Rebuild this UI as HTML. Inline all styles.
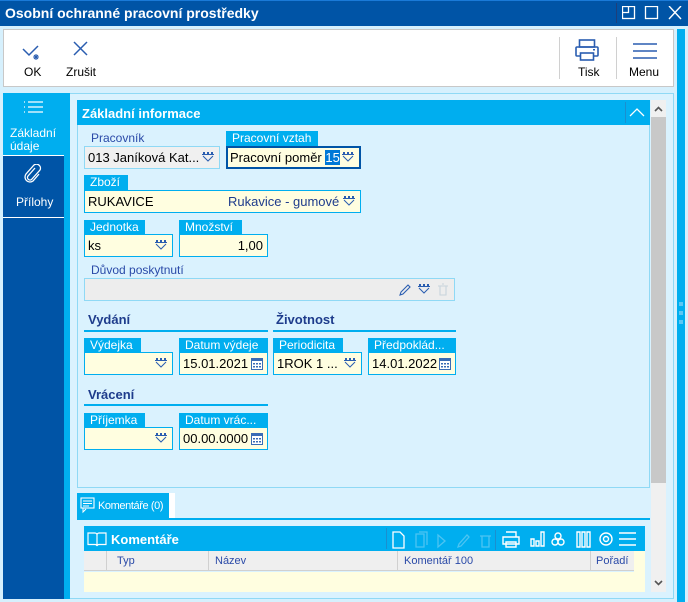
<!DOCTYPE html>
<html><head><meta charset="utf-8"><style>
*{box-sizing:border-box;margin:0;padding:0}
body{width:688px;height:602px;overflow:hidden;background:#d6f0fd;font-family:"Liberation Sans",sans-serif;font-size:12px;position:relative}
.a{position:absolute}
.lab{position:absolute;background:#00aeef;color:#fff;font-size:12px;line-height:15px;padding-left:6px;height:15px}
.plab{position:absolute;color:#2a4aa8;font-size:12px}
.inp{position:absolute;background:#fffee0;border:1px solid #00aeef;height:23px;line-height:21px;padding-left:3px;font-size:13px;color:#000;white-space:nowrap;overflow:hidden}
.dd{position:absolute;right:5px;top:5px}
.h{position:absolute;font-weight:bold;color:#1e3c8c;font-size:13px}
.ul{position:absolute;height:2px;background:#00aeef}
.cal{position:absolute;right:3px;top:4px}
</style></head><body>
<svg width="0" height="0" style="position:absolute"><defs>
<g id="dd"><rect x="1" y="0" width="2" height="2" fill="#2a5db0"/><rect x="5" y="0" width="2" height="2" fill="#2a5db0"/><rect x="9" y="0" width="2" height="2" fill="#2a5db0"/><path d="M0 2.5h12M1 4l5 5 5-5" stroke="#2a5db0" fill="none" stroke-width="1"/></g>
<g id="cal"><rect x="0.5" y="1.5" width="11" height="11" fill="#fff" stroke="#3a6cb5"/><rect x="0.5" y="1.5" width="11" height="2.5" fill="#3a6cb5"/><g fill="#3a6cb5"><rect x="2" y="6" width="2" height="1.5"/><rect x="5" y="6" width="2" height="1.5"/><rect x="8" y="6" width="2" height="1.5"/><rect x="2" y="9" width="2" height="1.5"/><rect x="5" y="9" width="2" height="1.5"/><rect x="8" y="9" width="2" height="1.5"/></g></g>
</defs></svg>

<!-- title bar -->
<div class="a" style="left:0;top:0;width:688px;height:26px;background:#0054a6;border-top:1px solid #1a7ad8"></div>
<div class="a" style="left:5px;top:5px;color:#fff;font-weight:bold;font-size:14px">Osobní ochranné pracovní prostředky</div>
<div class="a" style="left:616px;top:3px;width:1px;height:20px;background:#1e3f7a"></div>
<svg class="a" style="left:622px;top:6px" width="64" height="16"><rect x="0.5" y="0.5" width="12" height="12" fill="none" stroke="#fff" stroke-width="1.3"/><path d="M0.5 6.5h6v-6" fill="none" stroke="#fff" stroke-width="1.3"/><rect x="23.5" y="0.5" width="12" height="12" fill="none" stroke="#fff" stroke-width="1.3"/><path d="M47 0l12 13M59 0l-12 13" stroke="#fff" stroke-width="1.4"/></svg>

<!-- toolbar -->
<div class="a" style="left:3px;top:29px;width:671px;height:58px;background:#fff;border:1px solid #c8c8c8"></div>
<svg class="a" style="left:22px;top:42px" width="22" height="20"><path d="M1 7l6 6 9-9" stroke="#2a5db0" fill="none" stroke-width="1.5"/><path d="M14 12v6M11 15h6M12 13l4 4M16 13l-4 4" stroke="#2a5db0" stroke-width="1.1"/></svg>
<div class="a" style="left:24px;top:65px;font-size:12px">OK</div>
<svg class="a" style="left:73px;top:41px" width="16" height="16"><path d="M1 1l13 13M14 1L1 14" stroke="#2a5db0" stroke-width="1.5"/></svg>
<div class="a" style="left:66px;top:65px;font-size:12px">Zrušit</div>
<div class="a" style="left:559px;top:37px;width:1px;height:42px;background:#d0d0d0"></div>
<div class="a" style="left:616px;top:37px;width:1px;height:42px;background:#d0d0d0"></div>
<svg class="a" style="left:575px;top:39px" width="25" height="23"><rect x="4.5" y="1" width="15" height="7" fill="none" stroke="#2a5db0" stroke-width="1.6"/><rect x="1" y="8" width="22" height="9" rx="1" fill="none" stroke="#2a5db0" stroke-width="1.6"/><rect x="5.5" y="14" width="13" height="7" fill="#fff" stroke="#2a5db0" stroke-width="1.6"/><rect x="18" y="10" width="2" height="1.5" fill="#2a5db0"/></svg>
<div class="a" style="left:578px;top:65px;font-size:12px">Tisk</div>
<svg class="a" style="left:632px;top:42px" width="26" height="18"><path d="M1 2h24M1 9h24M1 16h24" stroke="#2a5db0" stroke-width="1.6"/></svg>
<div class="a" style="left:629px;top:65px;font-size:12px">Menu</div>

<!-- right strip -->
<div class="a" style="left:677px;top:29px;width:8px;height:573px;background:#00aeef"></div>
<div class="a" style="left:679px;top:302px;width:4px;height:4px;background:#5cc8f5"></div>
<div class="a" style="left:679px;top:311px;width:4px;height:4px;background:#5cc8f5"></div>
<div class="a" style="left:679px;top:320px;width:4px;height:4px;background:#5cc8f5"></div>

<!-- left nav -->
<div class="a" style="left:3px;top:93px;width:61px;height:506px;background:#0054a6"></div>
<div class="a" style="left:3px;top:93px;width:61px;height:62px;background:#00aeef"></div>
<div class="a" style="left:3px;top:155px;width:61px;height:1px;background:#fff"></div>
<div class="a" style="left:3px;top:217px;width:61px;height:1px;background:#fff"></div>
<svg class="a" style="left:22px;top:101px" width="22" height="14"><path d="M2 1h1M2 6h1M2 11h1M6 1h15M6 6h15M6 11h15" stroke="#fff" stroke-width="1.2"/></svg>
<div class="a" style="left:10px;top:127px;color:#fff;font-size:12px;line-height:13px">Základní<br>údaje</div>
<svg class="a" style="left:24px;top:164px" width="18" height="20"><path d="M11 4L4 12a2.5 2.5 0 0 0 4 3l8-9a4 4 0 0 0-6-5L2 10a5 5 0 0 0 7 7l6-7" fill="none" stroke="#fff" stroke-width="1.3"/></svg>
<div class="a" style="left:16px;top:195px;color:#fff;font-size:12px">Přílohy</div>
<div class="a" style="left:64px;top:93px;width:6px;height:506px;background:#00aeef"></div>

<!-- content -->
<div class="a" style="left:70px;top:93px;width:604px;height:506px;background:#daf2fe;border:1px solid #8fd9f5;border-left:none"></div>
<div class="a" style="left:77px;top:100px;width:573px;height:388px;border:1px solid #8fd9f5"></div>
<div class="a" style="left:77px;top:100px;width:573px;height:25px;background:#00aeef"></div>
<div class="a" style="left:82px;top:106px;color:#fff;font-weight:bold;font-size:13px">Základní informace</div>
<div class="a" style="left:625px;top:102px;width:1px;height:21px;background:#1a8fcf"></div>
<svg class="a" style="left:629px;top:108px" width="16" height="9"><path d="M1 8l7-7 7 7" stroke="#fff" fill="none" stroke-width="1.3"/></svg>
<!-- scrollbar -->
<div class="a" style="left:651px;top:100px;width:15px;height:492px;background:#f0f0f0"></div>
<div class="a" style="left:651px;top:117px;width:15px;height:366px;background:#c8c8c8"></div>
<svg class="a" style="left:654px;top:106px" width="9" height="6"><path d="M1 5l3.5-3.5L8 5" stroke="#555" fill="none" stroke-width="1.6"/></svg>
<svg class="a" style="left:654px;top:580px" width="9" height="6"><path d="M1 1l3.5 3.5L8 1" stroke="#555" fill="none" stroke-width="1.6"/></svg>

<!-- Pracovník -->
<div class="plab" style="left:91px;top:131px">Pracovník</div>
<div class="inp" style="left:84px;top:146px;width:136px;background:#f0f0f0;border-color:#8fd9f5">013 Janíková Kat...<svg class="dd" width="12" height="10"><use href="#dd"/></svg></div>
<div class="lab" style="left:226px;top:131px;width:92px">Pracovní vztah</div>
<div class="inp" style="left:226px;top:146px;width:135px;border:2px solid #0054a6;line-height:19px;padding-left:2px">Pracovní poměr <span style="background:#0078d7;color:#fff">15</span><svg class="dd" width="12" height="10" style="top:4px"><use href="#dd"/></svg></div>
<!-- Zboží -->
<div class="lab" style="left:84px;top:175px;width:44px">Zboží</div>
<div class="inp" style="left:84px;top:190px;width:277px">RUKAVICE<span class="a" style="left:143px;color:#1e3c8c">Rukavice - gumové</span><svg class="dd" width="12" height="10"><use href="#dd"/></svg></div>
<!-- Jednotka / Množství -->
<div class="lab" style="left:84px;top:220px;width:61px">Jednotka</div>
<div class="inp" style="left:84px;top:234px;width:89px">ks<svg class="dd" width="12" height="10"><use href="#dd"/></svg></div>
<div class="lab" style="left:179px;top:220px;width:63px">Množství</div>
<div class="inp" style="left:179px;top:234px;width:89px;text-align:right;padding-right:4px">1,00</div>
<!-- Důvod -->
<div class="plab" style="left:91px;top:263px">Důvod poskytnutí</div>
<div class="inp" style="left:84px;top:278px;width:371px;background:#ededed;border-color:#8fd9f5"></div>
<svg class="a" style="left:398px;top:283px" width="60" height="14"><path d="M2 12l1-3 7-7 2 2-7 7z" fill="none" stroke="#2a5db0" stroke-width="1.1"/><g transform="translate(20,1)"><use href="#dd"/></g><path d="M40 3h10M42 3v9h6V3M44 1h2" fill="none" stroke="#c8d4dc" stroke-width="1.1"/></svg>
<!-- Vydání / Životnost -->
<div class="h" style="left:88px;top:312px">Vydání</div>
<div class="ul" style="left:84px;top:330px;width:184px"></div>
<div class="h" style="left:276px;top:312px">Životnost</div>
<div class="ul" style="left:273px;top:330px;width:183px"></div>
<div class="lab" style="left:84px;top:338px;width:57px">Výdejka</div>
<div class="inp" style="left:84px;top:352px;width:89px"><svg class="dd" width="12" height="10"><use href="#dd"/></svg></div>
<div class="lab" style="left:179px;top:338px;width:89px">Datum výdeje</div>
<div class="inp" style="left:179px;top:352px;width:89px">15.01.2021<svg class="cal" width="13" height="14"><use href="#cal"/></svg></div>
<div class="lab" style="left:273px;top:338px;width:70px">Periodicita</div>
<div class="inp" style="left:273px;top:352px;width:89px">1ROK 1 ...<svg class="dd" width="12" height="10"><use href="#dd"/></svg></div>
<div class="lab" style="left:368px;top:338px;width:88px">Předpoklád...</div>
<div class="inp" style="left:368px;top:352px;width:88px">14.01.2022<svg class="cal" width="13" height="14"><use href="#cal"/></svg></div>
<!-- Vrácení -->
<div class="h" style="left:88px;top:387px">Vrácení</div>
<div class="ul" style="left:84px;top:404px;width:184px"></div>
<div class="lab" style="left:84px;top:413px;width:61px">Příjemka</div>
<div class="inp" style="left:84px;top:427px;width:89px"><svg class="dd" width="12" height="10"><use href="#dd"/></svg></div>
<div class="lab" style="left:179px;top:413px;width:89px">Datum vrác...</div>
<div class="inp" style="left:179px;top:427px;width:89px">00.00.0000<svg class="cal" width="13" height="14"><use href="#cal"/></svg></div>

<!-- tabs -->
<div class="a" style="left:77px;top:493px;width:92px;height:26px;background:#00aeef"></div>
<div class="a" style="left:169px;top:493px;width:6px;height:26px;background:#fff"></div>
<svg class="a" style="left:80px;top:497px" width="16" height="17"><rect x="1" y="1" width="13" height="10" fill="none" stroke="#fff" stroke-width="1.1"/><path d="M3 4h9M3 6.5h9M3 9h6M3 11v4l3-3" fill="none" stroke="#fff" stroke-width="1"/></svg>
<div class="a" style="left:98px;top:500px;color:#fff;font-size:11px;letter-spacing:-0.4px;white-space:nowrap">Komentáře (0)</div>
<div class="a" style="left:77px;top:518px;width:573px;height:2px;background:#00aeef"></div>
<div class="a" style="left:84px;top:526px;width:561px;height:25px;background:#00aeef"></div>
<svg class="a" style="left:87px;top:531px" width="20" height="17"><path d="M1 2h7a2 2 0 0 1 2 2v11a2 2 0 0 0-2-1.5H1zM19 2h-7a2 2 0 0 0-2 2v11a2 2 0 0 1 2-1.5h7z" fill="none" stroke="#fff" stroke-width="1.2"/></svg>
<div class="a" style="left:111px;top:532px;color:#fff;font-weight:bold;font-size:13px">Komentáře</div>
<div class="a" style="left:386px;top:528px;width:1px;height:21px;background:#1a8fcf"></div>
<svg class="a" style="left:390px;top:529px" width="256" height="22"><g fill="none" stroke-width="1.3"><path d="M3 3h7l4 4v12H3z" stroke="#fff"/><path d="M26 5h8v13h-8zM29 3h8v13" stroke="#4cc4f2"/><path d="M48 6l7 6-7 6z" stroke="#4cc4f2"/><path d="M68 18l1-3 8-9 2 2-8 9z" stroke="#4cc4f2"/><path d="M90 7h11M92 7v11h7V7" stroke="#4cc4f2"/></g><rect x="105" y="1" width="1" height="20" fill="#1a8fcf"/><g fill="none" stroke="#fff" stroke-width="1.4"><path d="M116 3h10v5M113 8h16v7h-16zM116 13h10v5h-10z"/><path d="M141 10h3v7h-3zM146 12h3v5h-3zM151 3h3v14h-3z"/><circle cx="168" cy="7" r="3"/><circle cx="165" cy="13" r="3"/><circle cx="171" cy="13" r="3"/><path d="M187 3h3v15h-3zM192 3h3v15h-3zM197 3h3v15h-3z"/><circle cx="216" cy="10" r="6"/><circle cx="216" cy="10" r="2.5"/><path d="M229 4h17M229 10h17M229 16h17"/></g></svg>
<div class="a" style="left:84px;top:551px;width:550px;height:20px;background:#efefef;border-bottom:1px solid #d0d0d0"></div>
<div class="a" style="left:106px;top:551px;width:1px;height:20px;background:#d0d0d0"></div>
<div class="a" style="left:208px;top:551px;width:1px;height:20px;background:#d0d0d0"></div>
<div class="a" style="left:397px;top:551px;width:1px;height:20px;background:#d0d0d0"></div>
<div class="a" style="left:590px;top:551px;width:1px;height:20px;background:#d0d0d0"></div>
<div class="a" style="left:117px;top:555px;color:#2a4aa8;font-size:11px">Typ</div>
<div class="a" style="left:215px;top:555px;color:#2a4aa8;font-size:11px">Název</div>
<div class="a" style="left:404px;top:555px;color:#2a4aa8;font-size:11px">Komentář 100</div>
<div class="a" style="left:596px;top:555px;color:#2a4aa8;font-size:11px">Pořadí</div>
<div class="a" style="left:84px;top:572px;width:561px;height:20px;background:#fffee0"></div>
<div class="a" style="left:634px;top:551px;width:11px;height:21px;background:#fffee0"></div>
</body></html>
